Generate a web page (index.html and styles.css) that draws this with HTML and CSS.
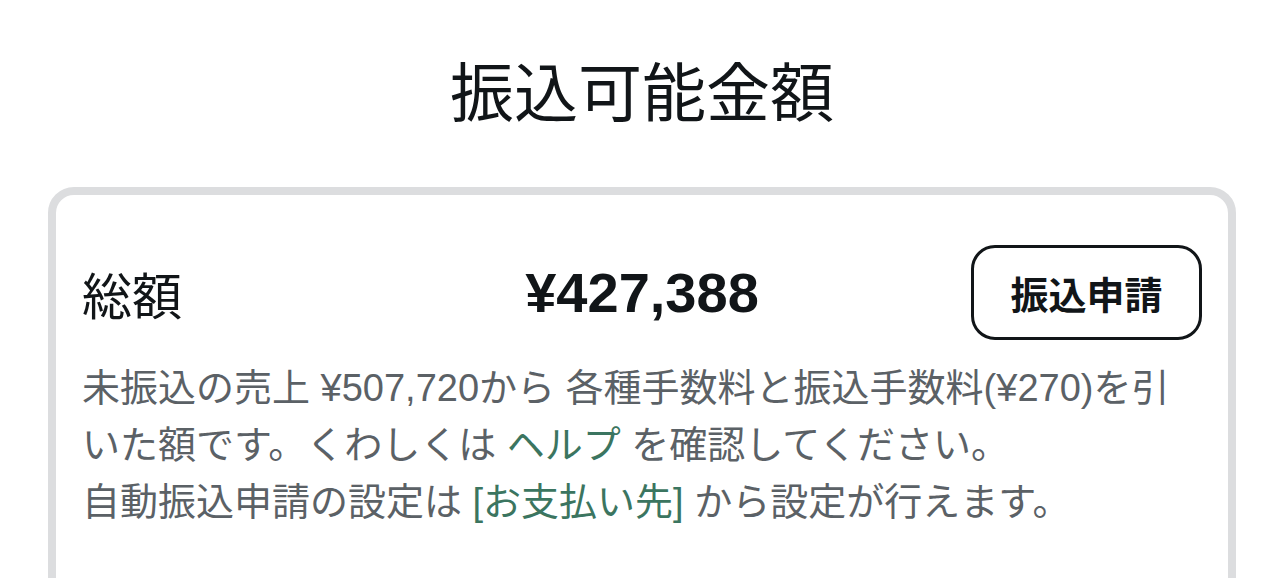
FILE: index.html
```html
<!DOCTYPE html>
<html lang="ja">
<head>
<meta charset="utf-8">
<link rel="stylesheet" href="styles.css">
<title>振込可能金額</title>
</head>
<body>
<main class="page">
  <h1 class="title">振込可能金額</h1>
  <section class="card">
    <div class="summary">
      <div class="label">総額</div>
      <div class="amount">¥427,388</div>
      <div class="action"><button class="btn" type="button">振込申請</button></div>
    </div>
    <p class="note">未振込の売上 ¥507,720から 各種手数料と振込手数料(¥270)を引いた額です。くわしくは <a class="link" href="#">ヘルプ</a> を確認してください。<br>自動振込申請の設定は <a class="link" href="#">[お支払い先]</a> から設定が行えます。</p>
  </section>
</main>
</body>
</html>
```

FILE: styles.css
```css
html, body {
  margin: 0;
  padding: 0;
  background: #ffffff;
}
body {
  font-family: "Liberation Sans", "Noto Sans CJK JP", sans-serif;
  color: #111518;
  overflow: hidden;
}
.page {
  padding: 0 48px;
}
.title {
  margin: 0;
  padding-top: 50px;
  font-family: "Noto Sans CJK JP", sans-serif;
  font-weight: 400;
  font-size: 64px;
  line-height: 77px;
  text-align: center;
  color: #111518;
}
.card {
  margin-top: 60px;
  border: 8px solid #dcdddf;
  border-radius: 26px;
  padding: 50px 26px 60px;
  min-height: 400px;
}
.summary {
  display: grid;
  grid-template-columns: 1fr auto 1fr;
  align-items: center;
}
.label {
  font-family: "Noto Sans CJK JP", sans-serif;
  font-size: 50px;
  line-height: 1;
}
.amount {
  font-family: "Liberation Sans", sans-serif;
  font-weight: 700;
  font-size: 56px;
  line-height: 1;
  text-align: center;
}
.action {
  display: flex;
  justify-content: flex-end;
}
.btn {
  box-sizing: border-box;
  width: 231px;
  height: 95px;
  border: 3px solid #111518;
  border-radius: 24px;
  background: #ffffff;
  color: #111518;
  font-family: "Noto Sans CJK JP", sans-serif;
  font-weight: 700;
  font-size: 38px;
  line-height: 1;
  padding: 0;
}
.note {
  margin: 20px 0 0;
  font-size: 38px;
  line-height: 57px;
  color: #5b6166;
}
.link {
  color: #3b7560;
  text-decoration: none;
}
```
